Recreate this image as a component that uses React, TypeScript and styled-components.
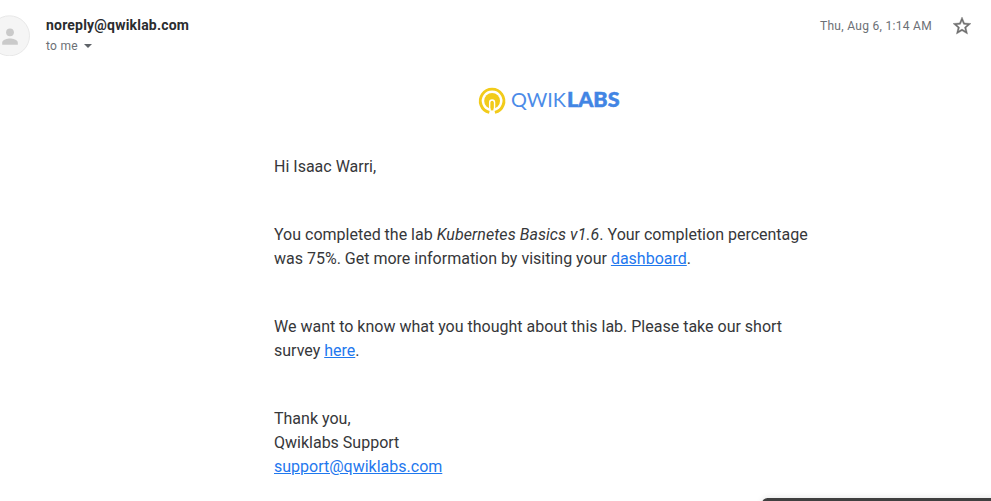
import React from "react";
import styled, { createGlobalStyle } from "styled-components";

const Global = createGlobalStyle`
  * { box-sizing: border-box; }
  body { margin: 0; background: #fff; font-family: Roboto, "Liberation Sans", sans-serif; overflow: hidden; }
`;
const Page = styled.main`
  position: relative;
  height: 501px;
  overflow: hidden;
  color: #36373a;
`;
const Header = styled.header`
  display: flex;
  height: 58px;
  padding-top: 15px;
`;
const Avatar = styled.svg`
  flex: none;
  width: 41px;
  height: 41px;
  margin-left: -11px;
`;
const Sender = styled.div`
  margin-left: 16px;
  flex: 1;
`;
const Address = styled.div`
  font-size: 14px;
  font-weight: 700;
  line-height: 20px;
  letter-spacing: 0.2px;
  color: #2b2c2f;
`;
const Recipient = styled.div`
  display: flex;
  align-items: center;
  padding-top: 1px;
  font-size: 12px;
  line-height: 20px;
  letter-spacing: 0.3px;
  color: #6c7075;
`;
const Caret = styled.svg`
  width: 8px;
  height: 4px;
  margin-left: 6px;
`;
const Time = styled.time`
  margin-right: 21px;
  font-size: 12px;
  line-height: 20px;
  letter-spacing: 0.3px;
  color: #6c7075;
  padding-top: 1px;
`;
const Star = styled.svg`
  width: 18px;
  height: 18px;
  margin: 2px 20px 0 0;
`;
const Message = styled.article`
  width: 550px;
  margin-left: 274px;
  font-size: 16px;
  line-height: 24px;
`;
const LabName = styled.em`
  letter-spacing: 0.06px;
`;
const Logo = styled.svg`
  display: block;
  width: 146px;
  height: 32px;
  margin: 27px 0 38px 202px;
`;
const Paragraph = styled.p`
  margin: 0 0 44px;
`;
const Link = styled.a`
  color: #1f78ee;
  text-decoration: underline;
`;
const Toast = styled.div`
  position: absolute;
  left: 762px;
  bottom: -8px;
  width: 260px;
  height: 11px;
  border-radius: 8px;
  background: #404040;
  box-shadow: 0 0 6px rgba(0, 0, 0, 0.12);
`;

export default function App() {
  return (
    <Page>
      <Global />
      <Header>
        <Avatar viewBox="0 0 41 41">
          <circle cx="20.5" cy="20.8" r="20" fill="#f5f5f5" stroke="#e8e8e8" />
          <circle cx="21" cy="17.3" r="3.9" fill="#cacaca" />
          <path d="M13.2 29.8v-2.1c0-2.8 5.2-4.1 7.8-4.1s7.8 1.3 7.8 4.1v2.1z" fill="#cacaca" />
        </Avatar>
        <Sender>
          <Address>noreply@qwiklab.com</Address>
          <Recipient>to me<Caret viewBox="0 0 8 4"><path d="M0 0h8L4 4z" fill="#5f6368" /></Caret></Recipient>
        </Sender>
        <Time>Thu, Aug 6, 1:14 AM</Time>
        <Star viewBox="2 2 20 20">
          <path fill="#707070" stroke="#707070" strokeWidth=".4" d="M22 9.24l-7.19-.62L12 2 9.19 8.63 2 9.24l5.46 4.73L5.82 21 12 17.27 18.18 21l-1.63-7.03L22 9.24zM12 15.4l-3.76 2.27 1-4.28-3.32-2.88 4.38-.38L12 6.1l1.71 4.04 4.38.38-3.32 2.88 1 4.28L12 15.4z" />
        </Star>
      </Header>
      <Message>
        <Logo viewBox="0 0 146 32" role="img" aria-label="Qwiklabs">
          <path d="M13.3 27.4a11.8 11.8 0 1 1 5.6 0" fill="none" stroke="#f2cb1a" strokeWidth="2.9" />
          <circle cx="16.1" cy="15.9" r="7.9" fill="#f2cb1a" />
          <path d="M13.7 24.6v-7.1a2.4 2.4 0 0 1 4.8 0v7.1" fill="none" stroke="#fff" strokeWidth="1.5" />
          <path d="M16.1 17.2v8.2" stroke="#f2cb1a" strokeWidth="2.6" />
          <text x="35" y="22.2" fill="#4b8be8" fontFamily="Lato" fontSize="20" textLength="55" lengthAdjust="spacingAndGlyphs">QWIK</text>
          <text x="91" y="22.2" fill="#4285e4" stroke="#4285e4" strokeWidth=".5" fontFamily="Lato" fontWeight="900" fontSize="20" textLength="52.5" lengthAdjust="spacingAndGlyphs">LABS</text>
        </Logo>
        <Paragraph>Hi Isaac Warri,</Paragraph>
        <Paragraph>You completed the lab <LabName>Kubernetes Basics v1.6</LabName>. Your completion percentage<br />was 75%. Get more information by visiting your <Link>dashboard</Link>.</Paragraph>
        <Paragraph>We want to know what you thought about this lab. Please take our short<br />survey <Link>here</Link>.</Paragraph>
        <Paragraph>Thank you,<br />Qwiklabs Support<br /><Link>support@qwiklabs.com</Link></Paragraph>
      </Message>
      <Toast />
    </Page>
  );
}
